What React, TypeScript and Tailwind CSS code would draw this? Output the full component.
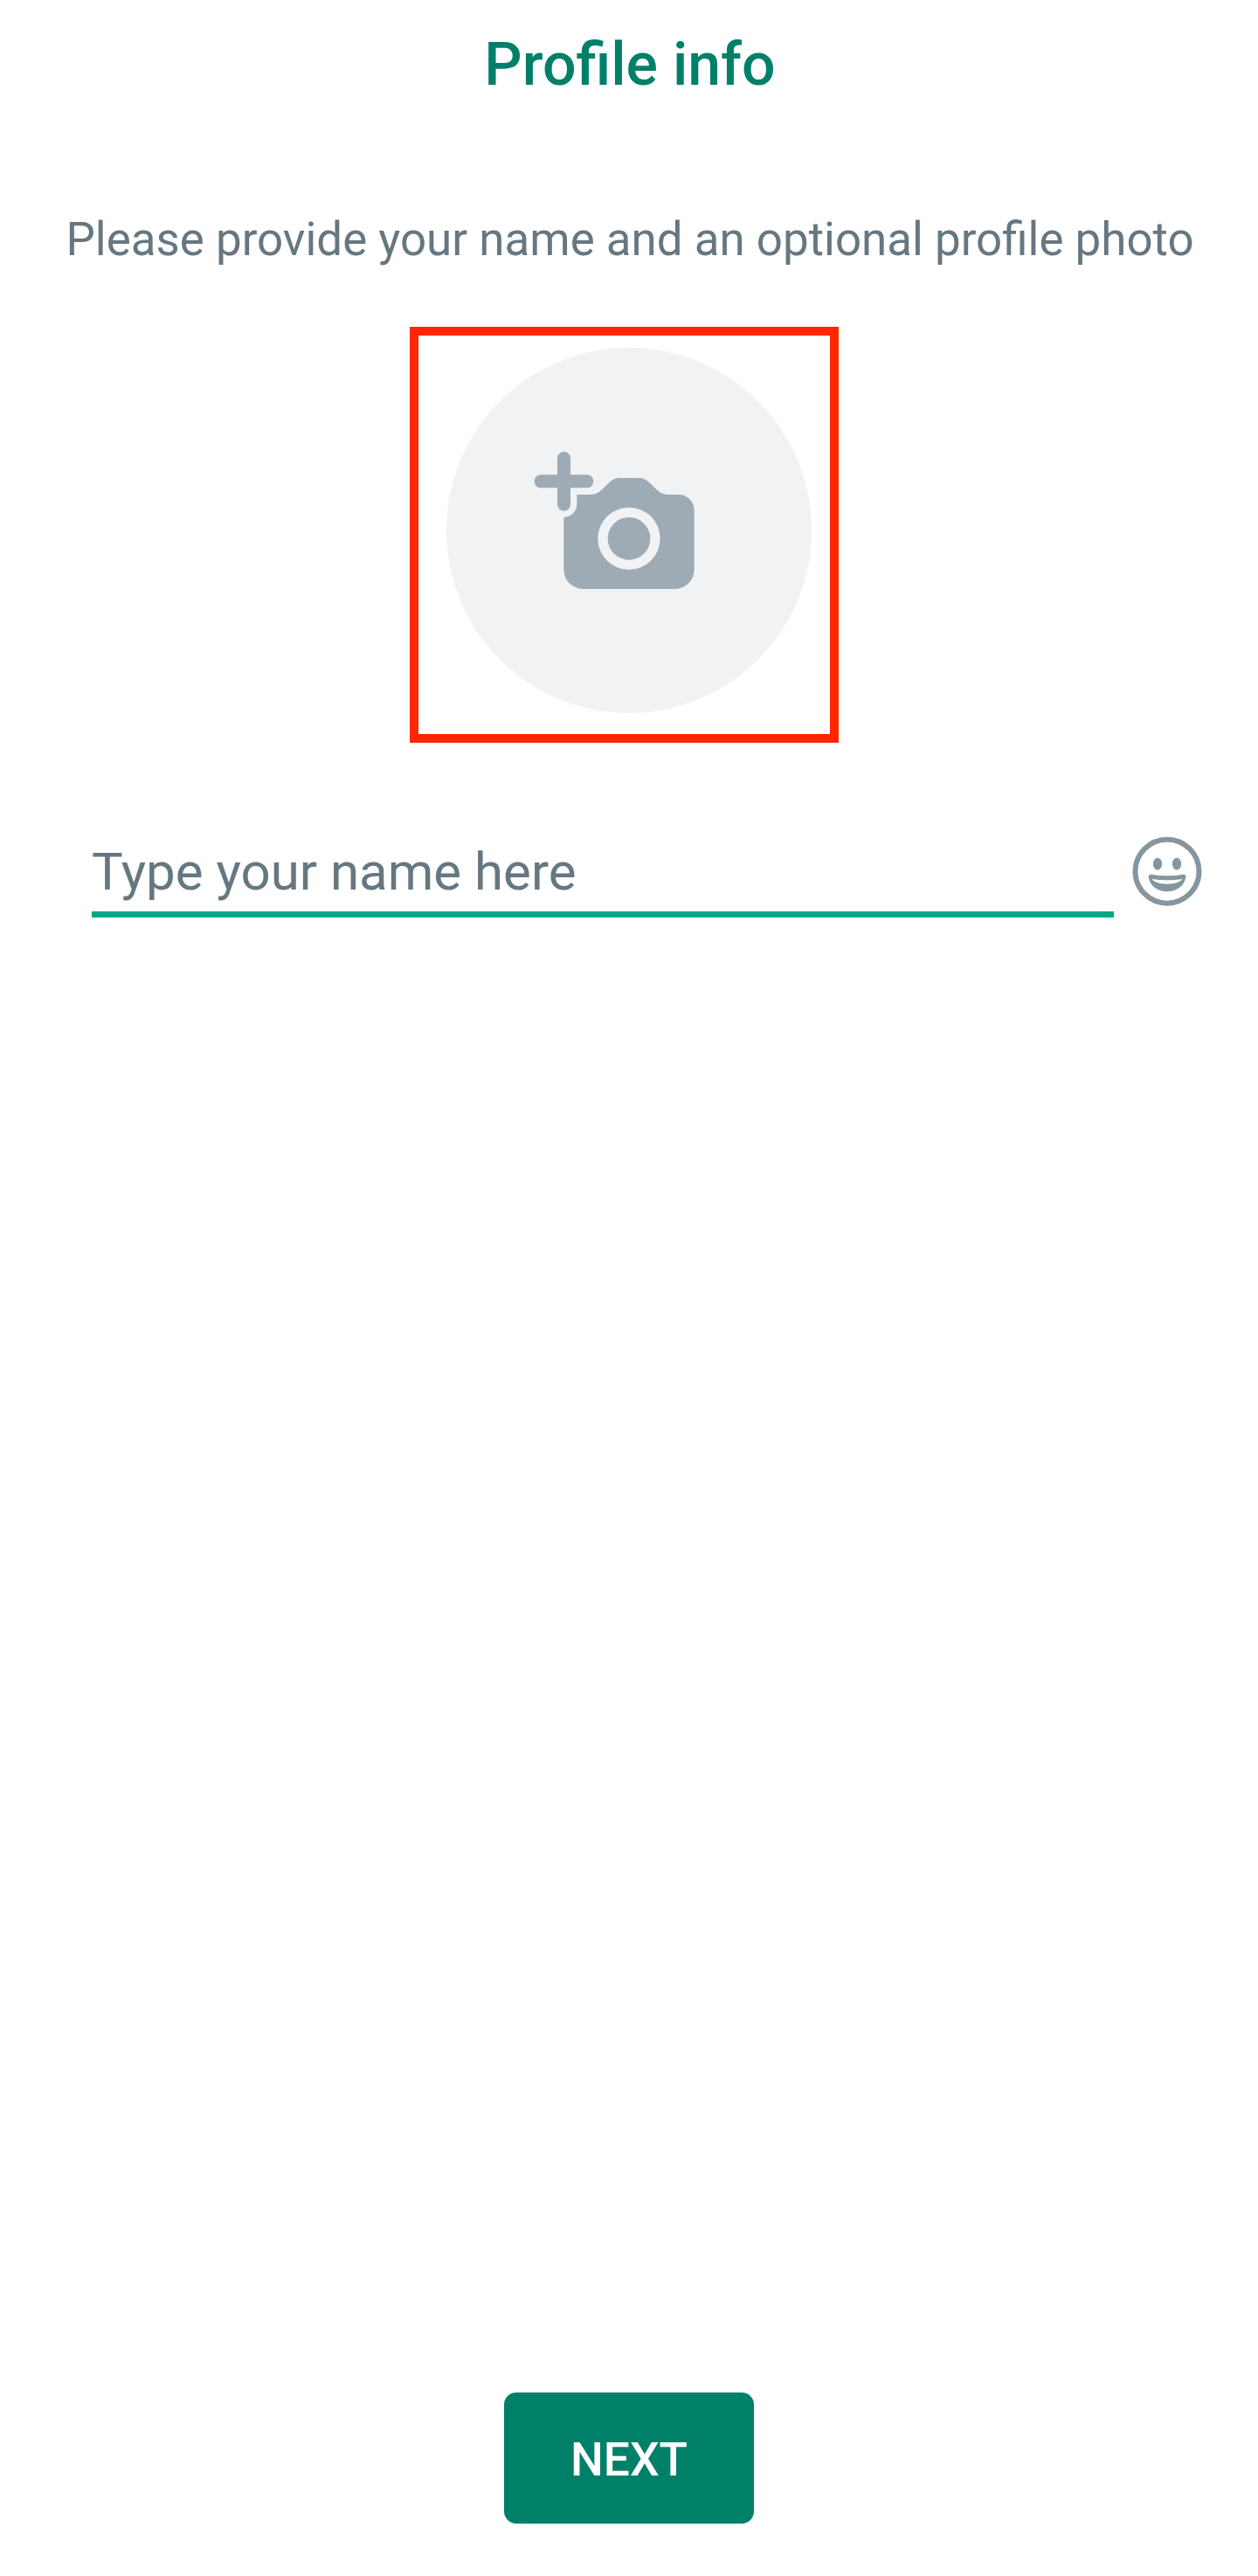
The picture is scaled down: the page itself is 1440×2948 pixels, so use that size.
function CameraPlusIcon() {
  return (
    <svg viewBox="0 0 690 570" className="h-[190px] w-[230px]" fill="#9fabb4" aria-hidden="true">
      <rect x="144" y="51" width="45" height="203" rx="22.5" />
      <rect x="65" y="130" width="203" height="45" rx="22.5" />
      <path
        fillRule="evenodd"
        d="M211 198H258Q279 198 294 184L322 157Q338 141 358 141H424Q444 141 460 157L487 183Q503 198 526 198H560A54 54 0 0 1 614 252V456A66 66 0 0 1 548 522H232A66 66 0 0 1 166 456V276A45 45 0 0 0 211 231ZM390 242A107 107 0 1 0 390 456A107 107 0 1 0 390 242Z"
      />
      <circle cx="390" cy="349" r="73" />
    </svg>
  );
}

function SmileIcon() {
  return (
    <svg viewBox="108 80 240 240" className="size-20" fill="#8696a0" aria-hidden="true">
      <circle cx="228" cy="200.5" r="109.5" fill="none" stroke="#8696a0" strokeWidth="18" />
      <ellipse cx="195" cy="175" rx="15.5" ry="21" />
      <ellipse cx="261" cy="175" rx="15.5" ry="21" />
      <path
        fillRule="evenodd"
        d="M173 211Q228 221 284 211Q293 210 292 220C288 248 262 270 228 270C194 270 168 248 164 220Q164 210 173 211ZM175 227Q228 235 281 227C270 239 251 244 228 244C205 244 186 239 175 227Z"
      />
    </svg>
  );
}

export default function App() {
  return (
    <main className="flex h-[2948px] w-[1440px] flex-col items-center bg-white font-['Roboto',sans-serif]">
      <h1 className="mt-[34px] pl-[2px] text-[68px] leading-[80px] font-medium whitespace-nowrap text-[#008069]">
        Profile info
      </h1>
      <p className="mt-32 pl-[2px] text-[52.9px] leading-[64px] whitespace-nowrap text-[#667781]">
        Please provide your name and an optional profile photo
      </p>
      <div className="mt-[68px] mr-[11px] flex h-[476px] w-[491px] justify-center border-[10px] border-[#ff2600] pt-[14px] pl-[11px]">
        <button
          type="button"
          aria-label="Add profile photo"
          className="flex size-[418px] shrink-0 rounded-full bg-[#f0f2f4] pt-[102px] pl-[79px]"
        >
          <CameraPlusIcon />
        </button>
      </div>
      <div className="mt-[107px] flex w-full items-start pl-[105px]">
        <input
          type="text"
          placeholder="Type your name here"
          aria-label="Name"
          className="mt-[4px] h-[89px] w-[1170px] border-b-[7px] border-[#00a884] pb-[9px] text-[60px] leading-[72px] text-[#667781] outline-none placeholder:text-[#667781] placeholder:opacity-100"
        />
        <button type="button" aria-label="Insert emoji" className="ml-[21px]">
          <SmileIcon />
        </button>
      </div>
      <button
        type="button"
        className="mt-auto mb-[60px] flex h-[150px] w-[286px] items-center justify-center rounded-[14px] bg-[#008069] pt-[3px] text-[53.3px] leading-[64px] font-medium text-white"
      >
        NEXT
      </button>
    </main>
  );
}
